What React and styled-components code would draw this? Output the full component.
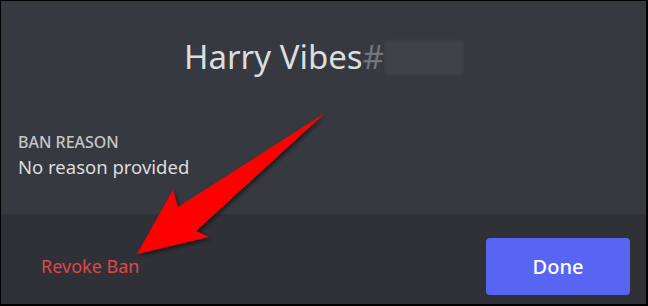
import React from "react";
import styled, { createGlobalStyle } from "styled-components";

const Global = createGlobalStyle`
  html, body { margin: 0; padding: 0; background: #000; }
  body { font-family: "Noto Sans", "Open Sans", sans-serif; }
  * { box-sizing: border-box; }
`;

const Frame = styled.div`
  position: relative;
  width: 648px;
  height: 306px;
  background: #000;
  padding: 1px 2px 2px 1px;
  display: flex;
  flex-direction: column;
  overflow: hidden;
`;

const Body = styled.div`
  flex: 1;
  background: #36393f;
  padding: 38px 0 0 17px;
  display: flex;
  flex-direction: column;
`;

const Title = styled.h1`
  margin: 0 0 0 -17px;
  display: flex;
  justify-content: center;
  align-items: center;
  font-size: 33px;
  line-height: 36px;
  font-weight: 400;
  color: #dcddde;
`;

const Tag = styled.span`
  color: #72767d;
`;

const Hidden = styled.span`
  display: inline-block;
  width: 78px;
  height: 35px;
  margin-left: 1px;
  background: #3f4248;
  filter: blur(1px);
`;

const Section = styled.div`
  margin-top: 57px;
  display: flex;
  flex-direction: column;
  gap: 3px;
`;

const Label = styled.div`
  font-size: 16px;
  line-height: 20px;
  font-weight: 500;
  color: #c4c6c9;
`;

const Value = styled.div`
  font-size: 18.5px;
  line-height: 24px;
  color: #dcddde;
`;

const Footer = styled.div`
  height: 90px;
  background: #2f3136;
  display: flex;
  align-items: center;
  justify-content: space-between;
  padding: 14px 16px 0 40px;
`;

const LinkButton = styled.button`
  background: none;
  border: 0;
  padding: 0;
  font-family: inherit;
  font-size: 18px;
  color: #e0474b;
  cursor: pointer;
`;

const PrimaryButton = styled.button`
  width: 144px;
  height: 57px;
  border: 0;
  border-radius: 4px;
  background: #5865f2;
  color: #fff;
  font-family: inherit;
  font-size: 20px;
  font-weight: 500;
  cursor: pointer;
`;

const Overlay = styled.svg`
  position: absolute;
  left: 0;
  top: 0;
  pointer-events: none;
`;

export default function App() {
  return (
    <>
      <Global />
      <Frame>
        <Body>
          <Title>
            Harry Vibes<Tag>#</Tag>
            <Hidden />
          </Title>
          <Section>
            <Label>BAN REASON</Label>
            <Value>No reason provided</Value>
          </Section>
        </Body>
        <Footer>
          <LinkButton>Revoke Ban</LinkButton>
          <PrimaryButton>Done</PrimaryButton>
        </Footer>
        <Overlay width="648" height="306" viewBox="0 0 648 306">
          <defs>
            <filter id="sh" x="-20%" y="-20%" width="140%" height="140%">
              <feDropShadow dx="2" dy="2" stdDeviation="2" floodColor="#000" floodOpacity="0.55" />
            </filter>
          </defs>
          <polygon
            points="137,254 173,190 178,207 325,113 196,231 209,237"
            fill="#ff0000"
            filter="url(#sh)"
          />
        </Overlay>
      </Frame>
    </>
  );
}
